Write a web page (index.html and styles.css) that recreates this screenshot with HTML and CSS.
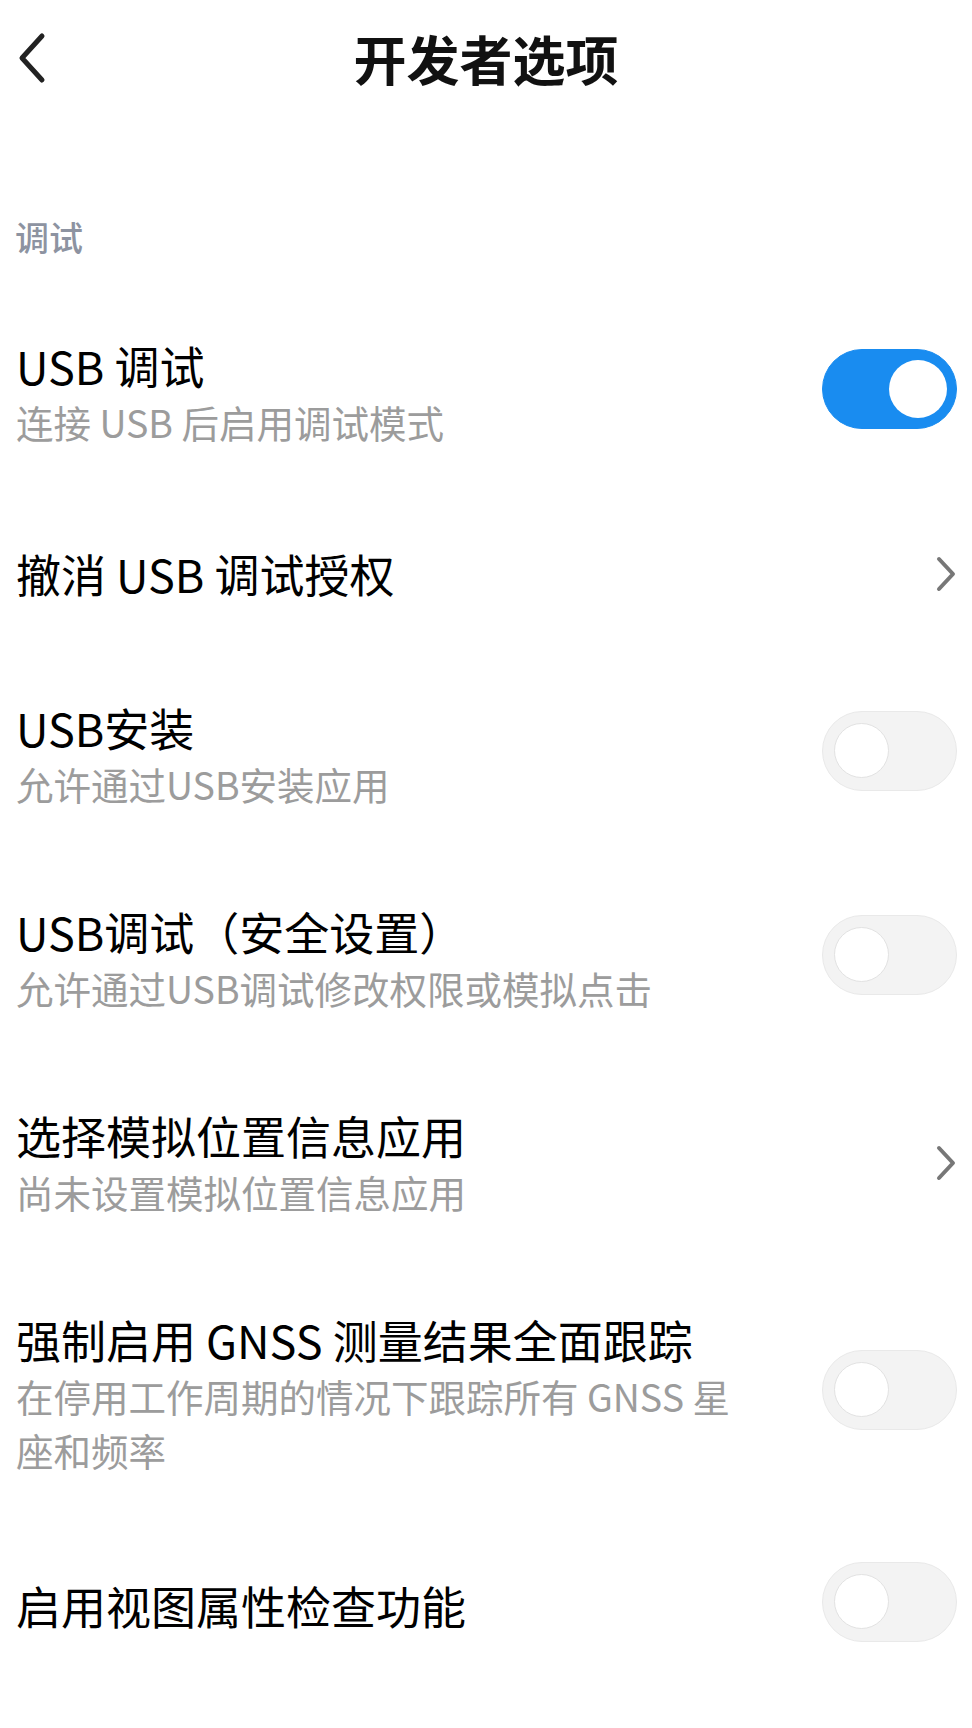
FILE: index.html
```html
<!DOCTYPE html>
<html lang="zh-CN">
<head>
<meta charset="utf-8">
<title>开发者选项</title>
<link rel="stylesheet" href="styles.css">
</head>
<body>
<header class="topbar">
  <div class="back">
    <svg width="40" height="56" viewBox="0 0 40 56" aria-hidden="true">
      <polyline points="26,6 6,28 26,50" fill="none" stroke="#222" stroke-width="5" stroke-linecap="round" stroke-linejoin="round"/>
    </svg>
  </div>
  <h1 class="title">开发者选项</h1>
  <div class="spacer"></div>
</header>

<main>
  <div class="section">调试</div>

  <div class="row">
    <div class="text">
      <div class="label">USB 调试</div>
      <div class="sub">连接 USB 后启用调试模式</div>
    </div>
    <div class="switch on"><span class="knob"></span></div>
  </div>

  <div class="row single">
    <div class="text">
      <div class="label">撤消 USB 调试授权</div>
    </div>
    <svg class="chev" width="22" height="36" viewBox="0 0 22 36" aria-hidden="true">
      <polyline points="4,3 18,18 4,33" fill="none" stroke="#777" stroke-width="4" stroke-linecap="round" stroke-linejoin="round"/>
    </svg>
  </div>

  <div class="row">
    <div class="text">
      <div class="label">USB安装</div>
      <div class="sub">允许通过USB安装应用</div>
    </div>
    <div class="switch"><span class="knob"></span></div>
  </div>

  <div class="row">
    <div class="text">
      <div class="label">USB调试（安全设置）</div>
      <div class="sub">允许通过USB调试修改权限或模拟点击</div>
    </div>
    <div class="switch"><span class="knob"></span></div>
  </div>

  <div class="row">
    <div class="text">
      <div class="label">选择模拟位置信息应用</div>
      <div class="sub">尚未设置模拟位置信息应用</div>
    </div>
    <svg class="chev" width="22" height="36" viewBox="0 0 22 36" aria-hidden="true">
      <polyline points="4,3 18,18 4,33" fill="none" stroke="#777" stroke-width="4" stroke-linecap="round" stroke-linejoin="round"/>
    </svg>
  </div>

  <div class="row">
    <div class="text">
      <div class="label">强制启用 GNSS 测量结果全面跟踪</div>
      <div class="sub">在停用工作周期的情况下跟踪所有 GNSS 星座和频率</div>
    </div>
    <div class="switch"><span class="knob"></span></div>
  </div>

  <div class="row single last">
    <div class="text">
      <div class="label">启用视图属性检查功能</div>
    </div>
    <div class="switch"><span class="knob"></span></div>
  </div>
</main>
</body>
</html>
```

FILE: styles.css
```css
* { box-sizing: border-box; }

html, body {
  margin: 0;
  padding: 0;
  background: #ffffff;
}

body {
  font-family: "Noto Sans CJK SC", "Noto Sans", sans-serif;
  color: #000;
  width: 972px;
}

.topbar {
  display: grid;
  grid-template-columns: 1fr auto 1fr;
  align-items: center;
  height: 116px;
}

.back {
  display: flex;
  align-items: center;
  padding-left: 16px;
}

.back svg { display: block; }

.title {
  margin: 0;
  font-size: 53px;
  font-weight: 700;
  line-height: 116px;
  color: #111;
}

.section {
  margin: 97px 0 30px;
  padding-left: 15px;
  font-size: 34px;
  line-height: 48px;
  color: #8d93a1;
  font-weight: 500;
}

.row {
  display: flex;
  align-items: center;
  padding: 46px 15px 46px 16px;
}

.row.single {
  padding-top: 50px;
  padding-bottom: 50px;
}

.row.last {
  padding-top: 39px;
}

.text {
  width: 728px;
  flex: none;
}

.label {
  font-size: 45px;
  line-height: 58px;
  color: #000;
}

.sub {
  font-size: 37.5px;
  line-height: 54px;
  color: #9c9c9c;
}

.chev {
  display: block;
  margin-left: auto;
}

.switch {
  position: relative;
  margin-left: auto;
  margin-bottom: 8px;
  width: 135px;
  height: 80px;
  border-radius: 40px;
  background: #f3f3f3;
  border: 1.5px solid #e9e9e9;
  flex: none;
}

.switch .knob {
  position: absolute;
  left: 11px;
  top: 11px;
  width: 55px;
  height: 55px;
  border-radius: 50%;
  background: #fff;
  border: 1.5px solid #e2e2e2;
}

.switch.on {
  background: #198cf0;
  border-color: #198cf0;
}

.switch.on .knob {
  left: auto;
  right: 9px;
  top: 9.5px;
  width: 58px;
  height: 58px;
  border: none;
}
```
